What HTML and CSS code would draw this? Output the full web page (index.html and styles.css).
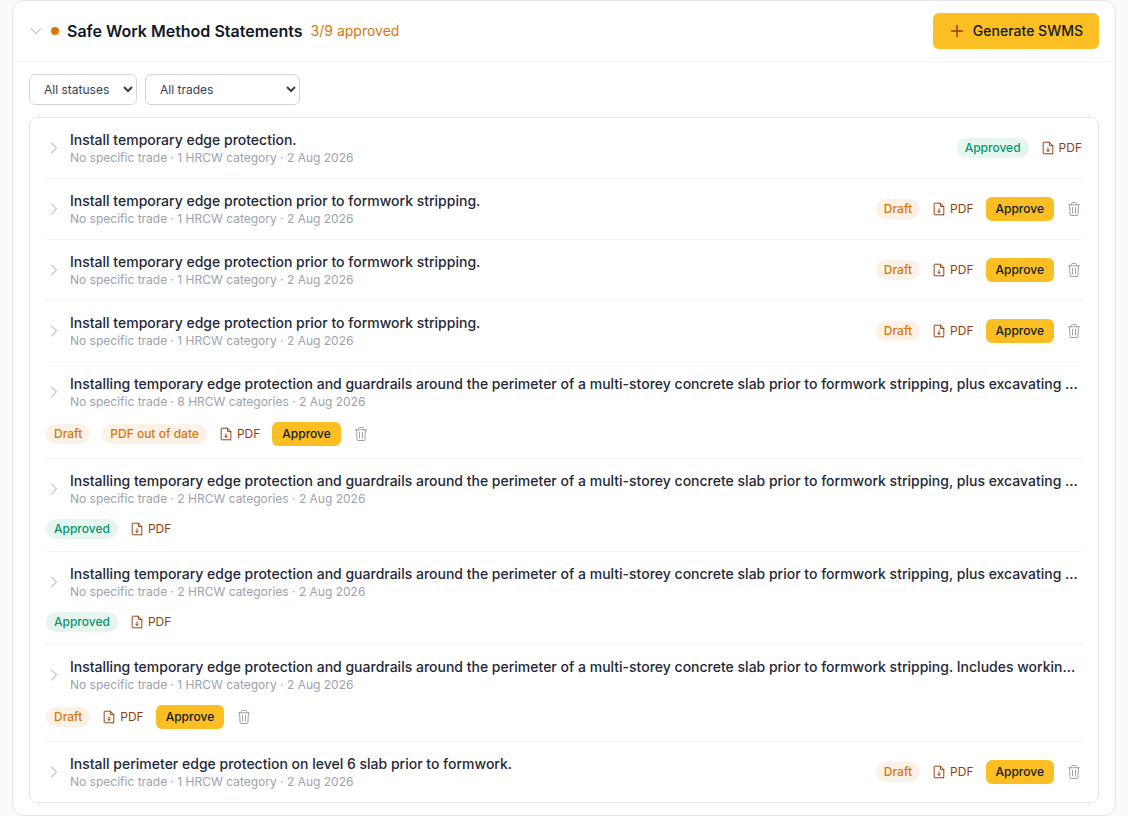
FILE: index.html
```
<!DOCTYPE html>
<html lang="en">
<head>
<meta charset="utf-8">
<meta name="viewport" content="width=device-width, initial-scale=1">
<title>Safe Work Method Statements</title>
<link rel="stylesheet" href="styles.css">
</head>
<body>
<svg class="sprite" aria-hidden="true">
  <symbol id="chevron-down" viewBox="12 12 232 232"><path d="m208 92-80 80-80-80"/></symbol>
  <symbol id="chevron-right" viewBox="0 0 256 256"><path d="m88 48 80 80-80 80"/></symbol>
  <symbol id="plus" viewBox="0 0 256 256"><path d="M128 40v176M40 128h176"/></symbol>
  <symbol id="file-down" viewBox="12 12 232 232"><path d="M200 224H56a8 8 0 0 1-8-8V40a8 8 0 0 1 8-8h96l56 56v128a8 8 0 0 1-8 8ZM152 32v56h56M128 124v60M104 160l24 24 24-24"/></symbol>
  <symbol id="trash" viewBox="0 0 256 256"><path d="M216 60H40M104 100v92M152 100v92M56 60l10 160a12 12 0 0 0 12 12h100a12 12 0 0 0 12-12l10-160M168 60V40a16 16 0 0 0-16-16h-48a16 16 0 0 0-16 16v20"/></symbol>
</svg>
<main class="panel">
  <header class="panel-header">
    <button class="icon-button" type="button" aria-label="Collapse section"><svg class="icon"><use href="#chevron-down"/></svg></button>
    <span class="status-dot"></span>
    <h1 class="panel-title">Safe Work Method Statements</h1>
    <span class="panel-count">3/9 approved</span>
    <button class="primary-button" type="button"><svg class="icon plus-icon"><use href="#plus"/></svg>Generate SWMS</button>
  </header>
  <div class="panel-body">
    <div class="filters">
      <select class="filter" aria-label="Status"><option>All statuses</option><option>Draft</option><option>Approved</option></select>
      <select class="filter filter-trade" aria-label="Trade"><option>All trades</option><option>No specific trade</option></select>
    </div>
    <ul class="list" id="statements"></ul>
  </div>
</main>
<script src="app.js"></script>
</body>
</html>
```
FILE: styles.css
```
* { box-sizing: border-box; }
body {
  margin: 0;
  padding: 0 12px;
  background: #f9fafb;
  color: #111827;
  font: 14px/20px Inter, "Liberation Sans", sans-serif;
}
button, select { font: inherit; cursor: pointer; }
button { border: 0; padding: 0; background: none; }
.sprite { position: absolute; width: 0; height: 0; }
.icon {
  display: block;
  flex: none;
  width: 14px;
  height: 14px;
  fill: none;
  stroke: currentColor;
  stroke-width: 16;
  stroke-linecap: round;
  stroke-linejoin: round;
}
.panel { background: #fff; border: 1px solid #e5e7eb; border-radius: 12px; }
.panel-header {
  display: flex;
  align-items: center;
  gap: 8px;
  padding: 12px 16px;
  border-bottom: 1px solid #f3f4f6;
}
.icon-button { color: #9ca3af; }
.status-dot { width: 8px; height: 8px; border-radius: 50%; background: #d97706; }
.panel-title { margin: 0; font-size: 16px; line-height: 24px; font-weight: 600; }
.panel-count { color: #d97706; }
.primary-button {
  display: flex;
  align-items: center;
  gap: 8px;
  margin-left: auto;
  padding: 8px 16px;
  border-radius: 6px;
  background: #fbbf24;
  color: #111827;
  font-weight: 500;
}
.plus-icon { width: 16px; height: 16px; color: #92400e; stroke-width: 24; }
.panel-body { padding: 12px 16px; }
.filters { display: flex; flex-wrap: wrap; gap: 8px; margin-bottom: 12px; }
.filter {
  height: 31px;
  padding: 0 10px;
  border: 1px solid #d1d5db;
  border-radius: 6px;
  background: #fff;
  color: #374151;
  font-size: 12px;
}
.filter-trade { width: 155px; }
.list {
  margin: 0;
  padding: 0 16px;
  list-style: none;
  border: 1px solid #e5e7eb;
  border-radius: 8px;
}
.row { display: flex; flex-wrap: wrap; align-items: center; gap: 12px; padding: 12px 0; }
.row + .row { border-top: 1px solid #f3f4f6; }
.summary {
  display: flex;
  flex: 1 1 auto;
  align-items: center;
  gap: 8px;
  min-width: 0;
  text-align: left;
}
.summary .icon { width: 16px; height: 16px; color: #9ca3af; }
.summary-text { min-width: 0; }
.name, .meta { display: block; overflow: hidden; white-space: nowrap; text-overflow: ellipsis; }
.name { color: #1f2937; font-weight: 500; }
.meta { color: #9ca3af; font-size: 12px; line-height: 16px; }
.actions { display: flex; align-items: center; gap: 12px; font-size: 12px; line-height: 16px; }
.badge { padding: 2px 8px; border-radius: 10px; font-weight: 500; }
.badge-amber { background: #fbf1e6; color: #d97706; }
.badge-green { background: #e6f5f0; color: #059669; }
.pdf-link { display: flex; align-items: center; gap: 4px; color: #92400e; text-decoration: none; }
.approve-button { padding: 4px 10px; border-radius: 6px; background: #fbbf24; color: #111827; font-weight: 500; }
.delete-button { color: #9ca3af; }
.delete-button .icon { width: 16px; height: 16px; }
```
FILE: app.js
```
const edge = "Install temporary edge protection prior to formwork stripping.";
const slab = "Installing temporary edge protection and guardrails around the perimeter of a multi-storey concrete slab prior to formwork stripping";
const excavation = slab + ", plus excavating service trenches";
const statements = [
  { name: "Install temporary edge protection.", categories: 1, approved: true },
  { name: edge, categories: 1 },
  { name: edge, categories: 1 },
  { name: edge, categories: 1 },
  { name: excavation, categories: 8, stale: true },
  { name: excavation, categories: 2, approved: true },
  { name: excavation, categories: 2, approved: true },
  { name: slab + ". Includes working at heights", categories: 1 },
  { name: "Install perimeter edge protection on level 6 slab prior to formwork.", categories: 1 }
];

const icon = (name) => `<svg class="icon"><use href="#${name}"/></svg>`;

document.getElementById("statements").innerHTML = statements.map((s) => `
  <li class="row">
    <button class="summary" type="button">${icon("chevron-right")}
      <span class="summary-text">
        <span class="name">${s.name}</span>
        <span class="meta">No specific trade · ${s.categories} HRCW ${s.categories === 1 ? "category" : "categories"} · 2 Aug 2026</span>
      </span>
    </button>
    <div class="actions">
      ${s.approved ? '<span class="badge badge-green">Approved</span>' : '<span class="badge badge-amber">Draft</span>'}
      ${s.stale ? '<span class="badge badge-amber">PDF out of date</span>' : ""}
      <a class="pdf-link" href="#">${icon("file-down")}PDF</a>
      ${s.approved ? "" : `<button class="approve-button" type="button">Approve</button>
      <button class="delete-button" type="button" aria-label="Delete">${icon("trash")}</button>`}
    </div>
  </li>`).join("");
```
